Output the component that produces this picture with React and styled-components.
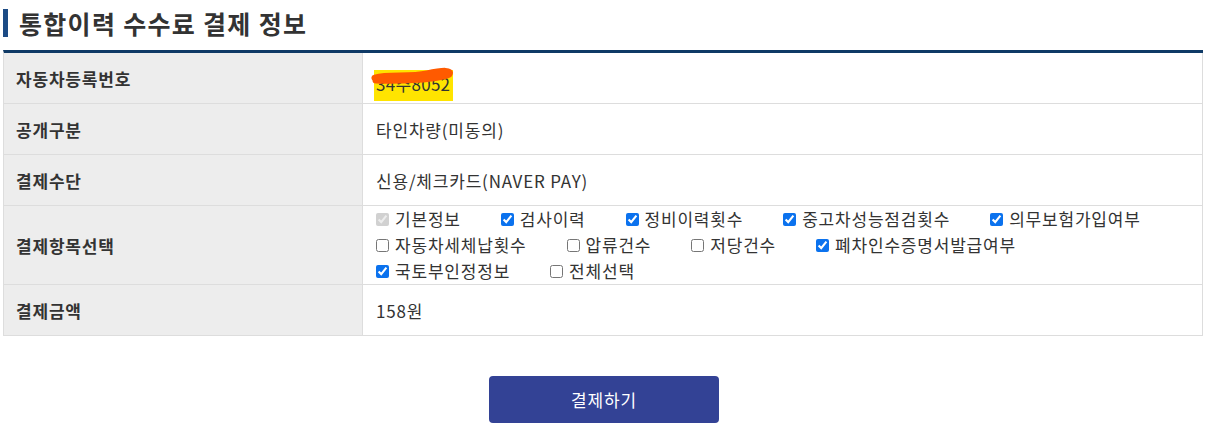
import React from 'react';
import styled, { createGlobalStyle } from 'styled-components';

const GlobalStyle = createGlobalStyle`
  body {
    margin: 0;
    background: #fff;
    font-family: "Noto Sans CJK KR", "Noto Sans", sans-serif;
    color: #333;
  }
`;

const Page = styled.div`
  padding: 6px 4px 0 3px;
`;

const Title = styled.h2`
  margin: 0 0 10px;
  display: flex;
  align-items: center;
  gap: 11px;
  font-size: 25px;
  font-weight: 700;
  letter-spacing: 1.3px;
  color: #333;
  line-height: 34px;
  &::before {
    content: '';
    width: 5px;
    height: 28px;
    background: #1c4b85;
  }
`;

const Table = styled.div`
  border-top: 3px solid #0f3a66;
  border-left: 1px solid #ddd;
  display: grid;
  grid-template-columns: 359px 1fr;
  font-size: 17px;
  letter-spacing: 0.8px;
`;

const Label = styled.div`
  background: #ededed;
  border-right: 1px solid #ddd;
  border-bottom: 1px solid #ddd;
  font-weight: 700;
  display: flex;
  align-items: center;
  padding-left: 12px;
  height: ${(p) => p.h || 50}px;
`;

const Value = styled.div`
  border-right: 1px solid #ddd;
  border-bottom: 1px solid #ddd;
  display: flex;
  align-items: center;
  padding-left: 13px;
`;

const Highlight = styled.span`
  position: relative;
  align-self: flex-end;
  margin: 0 0 2px -2px;
  display: inline-block;
  height: 31px;
  width: 79px;
  background: #ffe400;
  padding: 3px 2px 0;
  box-sizing: border-box;
  line-height: 22px;
  letter-spacing: 0.3px;
  white-space: nowrap;
  color: #333;
`;

const Scribble = styled.svg`
  position: absolute;
  left: -5px;
  top: -4px;
  width: 86px;
  height: 18px;
`;

const Checks = styled.div`
  display: flex;
  flex-direction: column;
`;

const CheckLine = styled.div`
  display: flex;
  align-items: center;
  height: 26px;
`;

const CheckItem = styled.label`
  display: flex;
  align-items: center;
  margin-right: 40px;
  white-space: nowrap;
  line-height: 26px;
  input {
    width: 13px;
    height: 13px;
    margin: 0 6px 0 0;
    accent-color: #0b72ee;
  }
`;

const ButtonRow = styled.div`
  display: flex;
  justify-content: center;
  padding-top: 40px;
`;

const PayButton = styled.button`
  width: 230px;
  height: 47px;
  background: #334295;
  color: #fff;
  border: none;
  border-radius: 4px;
  font-family: inherit;
  font-size: 17px;
  letter-spacing: 0.8px;
  margin-left: 2px;
`;

const rows = [
  [
    ['기본정보', true, true],
    ['검사이력', true],
    ['정비이력횟수', true],
    ['중고차성능점검횟수', true],
    ['의무보험가입여부', true],
  ],
  [
    ['자동차세체납횟수', false],
    ['압류건수', false],
    ['저당건수', false],
    ['폐차인수증명서발급여부', true],
  ],
  [
    ['국토부인정정보', true],
    ['전체선택', false],
  ],
];

export default function App() {
  return (
    <Page>
      <GlobalStyle />
      <Title>통합이력 수수료 결제 정보</Title>
      <Table>
        <Label>자동차등록번호</Label>
        <Value>
          <Highlight>
            34주8052
            <Scribble viewBox="0 0 86 18">
              <path d="M6 12 C 20 8, 40 12, 58 8 S 82 5, 80 8 C 70 13, 30 15, 7 14" fill="none" stroke="#ff5a00" strokeWidth="7" strokeLinecap="round" />
            </Scribble>
          </Highlight>
        </Value>
        <Label>공개구분</Label>
        <Value>타인차량(미동의)</Value>
        <Label>결제수단</Label>
        <Value>신용/체크카드(NAVER PAY)</Value>
        <Label h={78}>결제항목선택</Label>
        <Value>
          <Checks>
            {rows.map((r, i) => (
              <CheckLine key={i}>
                {r.map(([name, checked, disabled]) => (
                  <CheckItem key={name}>
                    <input type="checkbox" defaultChecked={checked} disabled={disabled} />
                    {name}
                  </CheckItem>
                ))}
              </CheckLine>
            ))}
          </Checks>
        </Value>
        <Label>결제금액</Label>
        <Value>158원</Value>
      </Table>
      <ButtonRow>
        <PayButton>결제하기</PayButton>
      </ButtonRow>
    </Page>
  );
}
